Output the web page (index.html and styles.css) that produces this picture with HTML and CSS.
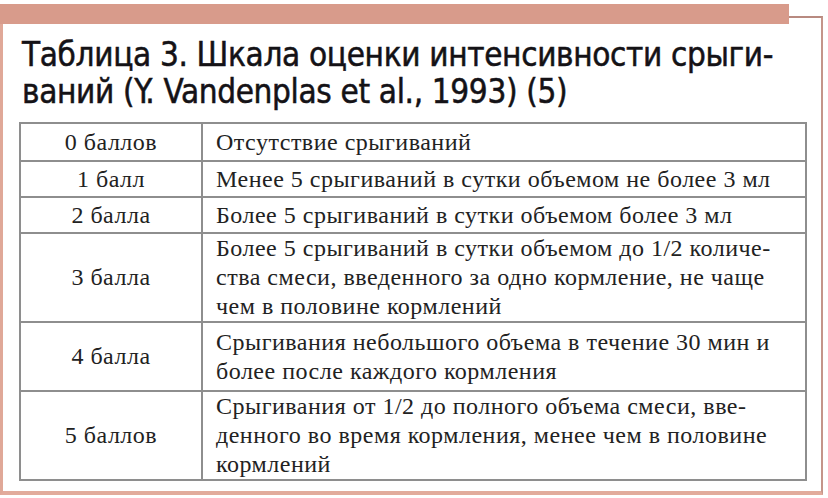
FILE: index.html
```html
<!DOCTYPE html>
<html lang="ru">
<head>
<meta charset="utf-8">
<title>Таблица 3</title>
<link rel="stylesheet" href="styles.css">
</head>
<body>
<div class="page">
  <div class="band"></div>
  <div class="frame">
    <h1 class="title">Таблица 3. Шкала оценки интенсивности срыги-<br>ваний (Y. Vandenplas et al., 1993) (5)</h1>
    <table class="scale">
      <tr class="r38"><td class="score">0 баллов</td><td class="desc">Отсутствие срыгиваний</td></tr>
      <tr class="r36"><td class="score">1 балл</td><td class="desc">Менее 5 срыгиваний в сутки объемом не более 3 мл</td></tr>
      <tr class="r36"><td class="score">2 балла</td><td class="desc">Более 5 срыгиваний в сутки объемом более 3 мл</td></tr>
      <tr class="r88"><td class="score">3 балла</td><td class="desc">Более 5 срыгиваний в сутки объемом до 1/2 количе-<br>ства смеси, введенного за одно кормление, не чаще<br>чем в половине кормлений</td></tr>
      <tr class="r69"><td class="score">4 балла</td><td class="desc">Срыгивания небольшого объема в течение 30 мин и<br>более после каждого кормления</td></tr>
      <tr class="r89"><td class="score">5 баллов</td><td class="desc">Срыгивания от 1/2 до полного объема смеси, вве-<br>денного во время кормления, менее чем в половине<br>кормлений</td></tr>
    </table>
  </div>
</div>
</body>
</html>
```

FILE: styles.css
```css
html, body {
  margin: 0;
  padding: 0;
  background: #ffffff;
}
.page {
  width: 828px;
  height: 498px;
  padding-top: 4px;
  box-sizing: border-box;
}
.band {
  position: relative;
  z-index: 1;
  width: 789px;
  height: 20px;
  background: #d89b8b;
}
.frame {
  width: 823px;
  height: 479px;
  margin-top: -8px;
  box-sizing: border-box;
  border-left: 3px solid #e0a898;
  border-right: 2px solid #c4958a;
  border-top: 2px solid #b88a80;
  border-bottom: 4px solid #e2ab9c;
  background: #ffffff;
}
.title {
  margin: 0;
  padding: 18px 0 0 19px;
  font-family: "DejaVu Sans Condensed", "DejaVu Sans", sans-serif;
  font-weight: normal;
  font-size: 33px;
  line-height: 37px;
  color: #141216;
  letter-spacing: -0.35px;
  -webkit-text-stroke: 0.5px #141216;
}
.scale {
  margin: 12px 0 0 16px;
  width: 788px;
  border-collapse: collapse;
  font-family: "Liberation Serif", "DejaVu Serif", serif;
  font-size: 24px;
  line-height: 29px;
  letter-spacing: 0.5px;
  color: #222222;
}
.scale td {
  border: 2px solid #8e8e8e;
  padding: 0;
  vertical-align: middle;
}
.score {
  width: 180px;
  text-align: center;
}
.desc {
  padding-left: 13px !important;
  text-align: left;
}
.r38 { height: 38px; }
.r36 { height: 36px; }
.r88 { height: 88px; }
.r69 { height: 69px; }
.r89 { height: 89px; }
```
